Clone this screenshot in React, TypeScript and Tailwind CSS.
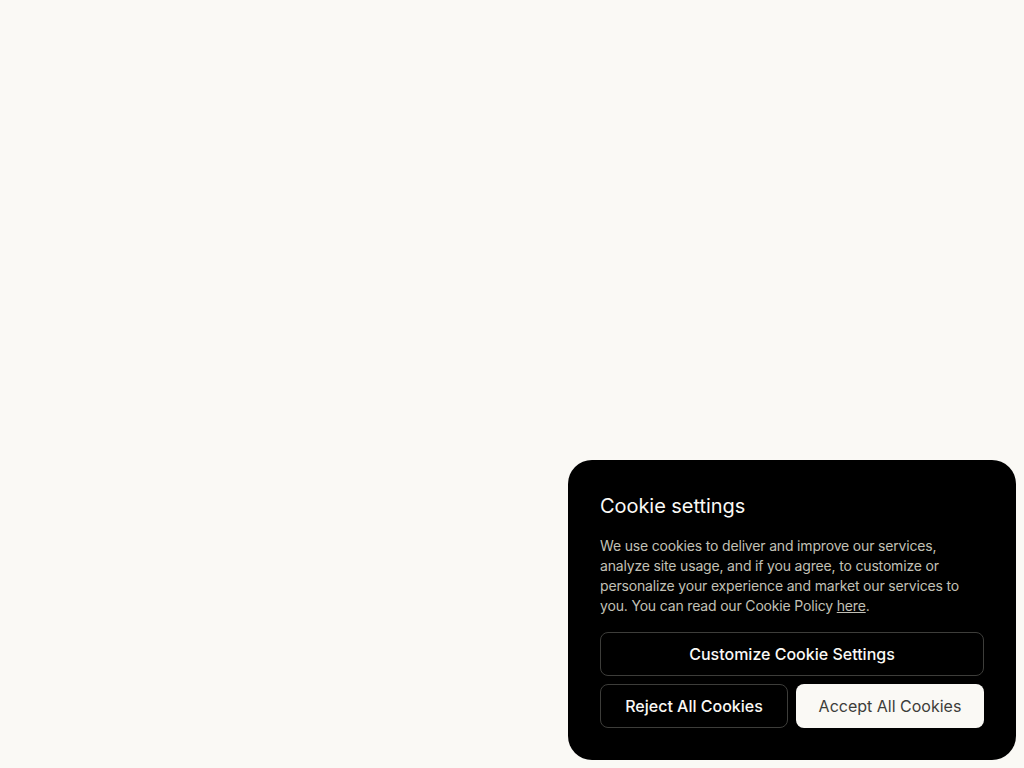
export default function App() {
  return (
    <div
      className="min-h-screen w-full bg-[#faf9f5] flex flex-col justify-end items-end p-2"
      style={{ fontFamily: "Inter, 'Noto Sans', sans-serif" }}
    >
      <div className="w-[448px] rounded-[24px] bg-black p-8 flex flex-col">
        <h2 className="text-[20px] leading-[28px] text-[#faf9f5] font-normal tracking-[-0.05px]">Cookie settings</h2>
        <div className="mt-4 text-[14px] leading-[20px] text-[#c2c0b6] tracking-[-0.17px]">
          <span>
            We use cookies to deliver and improve our services, analyze site usage, and if you agree, to customize or
            personalize your experience and market our services to you. You can read our Cookie Policy{" "}
          </span>
          <a className="underline text-[#c2c0b6]" href="#">here</a>
          <span>.</span>
        </div>
        <div className="mt-4 flex flex-col gap-2">
          <button className="h-11 w-full rounded-lg border border-[#3d3d3a] text-[#faf9f5] text-[16px] font-medium">
            Customize Cookie Settings
          </button>
          <div className="grid grid-cols-2 gap-2">
            <button className="h-11 rounded-lg border border-[#3d3d3a] text-[#faf9f5] text-[16px] font-medium">
              Reject All Cookies
            </button>
            <button className="h-11 rounded-lg bg-[#faf9f5] text-[#3d3d3a] text-[16px] font-normal">
              Accept All Cookies
            </button>
          </div>
        </div>
      </div>
    </div>
  );
}
